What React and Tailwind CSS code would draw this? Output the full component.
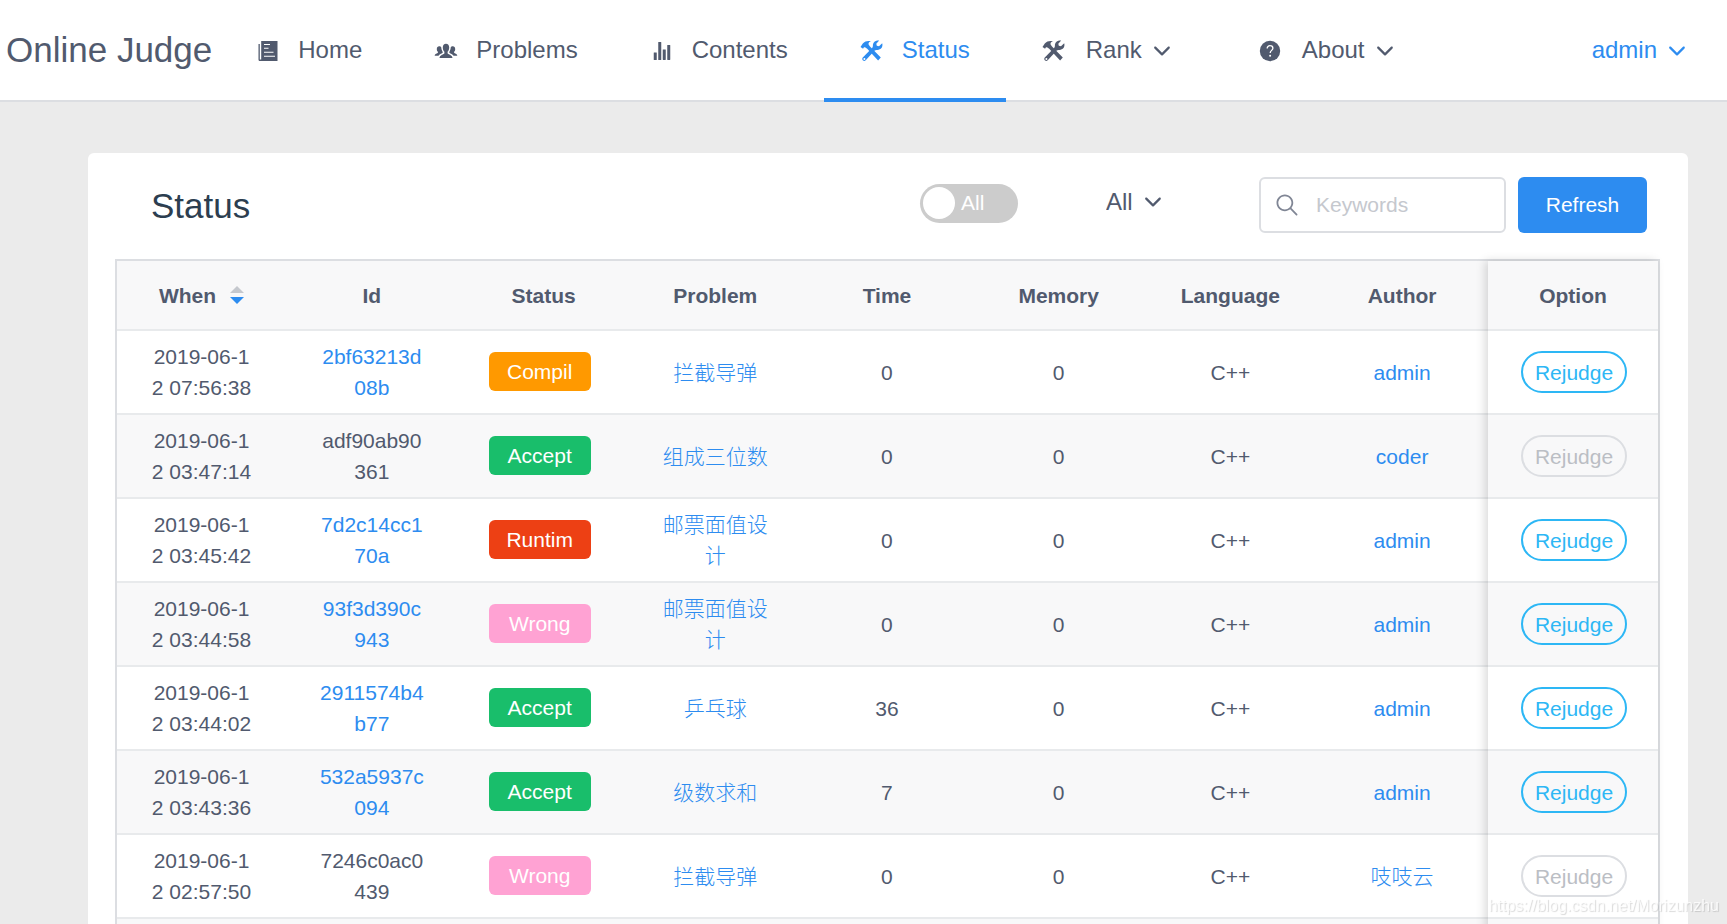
import { useState } from 'react';
import { IoIosStats, IoIosArrowDown, IoIosSearch } from 'react-icons/io';

function PaperIcon({ className }) {
  return (
    <svg viewBox="0 0 24 24" fill="currentColor" className={className}>
      <path d="M2.5 5h1.3v15.4h1.4V2h16.3v20H4.2c-1 0-1.700-.7-1.700-1.600z" />
      <path d="M8 5.500h6M8 9.200h4.500M8 13.200h9.500M8 17.200h11" stroke="#fff" strokeWidth="1.100" />
    </svg>
  );
}

function PeopleIcon({ className }) {
  return (
    <svg viewBox="0 0 24 24" fill="currentColor" className={className}>
      <path d="M12 4.800c2 0 3.200 1.500 3.200 3.700 0 1.700-.6 3.300-1.600 4.200v1.500c.3 1.300 4.600 1.400 4.900 4.800h-13c.3-3.400 4.600-3.500 4.900-4.800v-1.500c-1-.9-1.600-2.500-1.600-4.200 0-2.200 1.200-3.700 3.200-3.700z" />
      <path d="M5.200 7.200c1 0 1.800.5 2.100 1.400.1 1.700.5 3 1.400 4.300v.9c-1.400 1-3.300 1.300-4.200 3H.7c.2-2.200 2.700-2.100 3.200-3v-1c-.8-.6-1.100-1.700-1.100-2.900 0-1.700 1-2.700 2.400-2.700z" />
      <path d="M18.800 7.200c-1 0-1.800.5-2.100 1.400-.1 1.700-.5 3-1.400 4.300v.9c1.400 1 3.300 1.300 4.200 3h3.800c-.2-2.200-2.700-2.100-3.200-3v-1c.8-.6 1.100-1.700 1.100-2.900 0-1.700-1-2.700-2.400-2.700z" />
    </svg>
  );
}

function ConstructIcon({ className }) {
  return (
    <svg viewBox="0 0 24 24" fill="currentColor" className={className}>
      <path d="M.5 8l2.300-3.500C4.800 2.200 8 1.500 11 2.300 9 3 8.200 4 8.600 5.500L10 7.400l10.800 11.200-2.700 2.800L7.200 9.800 5.400 8.500c-1-.5-1.600-.2-2.300 1.200z" />
      <path
        fillRule="evenodd"
        d="M22.200 4.300L19 7.300l-2.200-.5-.5-2.100 2.900-3.100c-3.600-.6-6.500 1.800-6.300 5.200 0 .9-.2 1.500-.8 2.100l-9.300 9.600c-1.600 1.900.9 4.600 2.900 2.800l9-9.700c.6-.6 1.300-.8 2.300-.7 3.600.3 6.300-2.800 5.200-6.600zM4.400 19a1 1 0 1 1 0 2 1 1 0 0 1 0-2z"
      />
    </svg>
  );
}

function HelpIcon({ className }) {
  return (
    <svg viewBox="0 0 24 24" className={className}>
      <circle cx="12" cy="12" r="10.200" fill="currentColor" />
      <path d="M9.200 9.400c0-1.600 1.100-2.700 2.800-2.700s2.900 1 2.900 2.500c0 2.100-2.700 2.300-2.700 4.800" fill="none" stroke="#fff" strokeWidth="1.300" />
      <circle cx="12.100" cy="16.700" r="1" fill="#fff" />
    </svg>
  );
}

const NAV = [
  { label: 'Home', icon: PaperIcon },
  { label: 'Problems', icon: PeopleIcon },
  { label: 'Contents', icon: IoIosStats },
  { label: 'Status', icon: ConstructIcon, active: true },
  { label: 'Rank', icon: ConstructIcon, menu: true },
  { label: 'About', icon: HelpIcon, menu: true },
];

const COLUMNS = ['When', 'Id', 'Status', 'Problem', 'Time', 'Memory', 'Language', 'Author', 'Option'];

const STATUS_COLORS = {
  Compil: 'bg-[#ff9900]',
  Accept: 'bg-[#19be6b]',
  Runtim: 'bg-[#ed4014]',
  Wrong: 'bg-[#ffa2d3]',
};

const ROWS = [
  { when: '2019-06-12 07:56:38', id: '2bf63213d08b', status: 'Compil', problem: '拦截导弹', time: 0, author: 'admin', own: true, rejudge: true },
  { when: '2019-06-12 03:47:14', id: 'adf90ab90361', status: 'Accept', problem: '组成三位数', time: 0, author: 'coder', own: false, rejudge: false },
  { when: '2019-06-12 03:45:42', id: '7d2c14cc170a', status: 'Runtim', problem: '邮票面值设计', time: 0, author: 'admin', own: true, rejudge: true },
  { when: '2019-06-12 03:44:58', id: '93f3d390c943', status: 'Wrong', problem: '邮票面值设计', time: 0, author: 'admin', own: true, rejudge: true },
  { when: '2019-06-12 03:44:02', id: '2911574b4b77', status: 'Accept', problem: '乒乓球', time: 36, author: 'admin', own: true, rejudge: true },
  { when: '2019-06-12 03:43:36', id: '532a5937c094', status: 'Accept', problem: '级数求和', time: 7, author: 'admin', own: true, rejudge: true },
  { when: '2019-06-12 02:57:50', id: '7246c0ac0439', status: 'Wrong', problem: '拦截导弹', time: 0, author: '吱吱云', own: false, rejudge: false },
];

function NavItem({ label, icon: Icon, active, menu }) {
  const Tag = menu ? 'button' : 'a';
  const state = active ? 'border-[#2d8cf0] text-[#2d8cf0]' : 'border-transparent text-[#515a6e]';

  return (
    <Tag
      {...(menu ? { type: 'button' } : { href: '#' })}
      className={`-mb-0.5 flex h-[102px] items-center border-b-4 px-9 pt-0.5 ${menu ? 'gap-5' : 'gap-[18px]'} ${state}`}
    >
      <Icon className="mt-0.5 size-6" />
      <span className="flex items-center gap-2">
        {label}
        {menu && <IoIosArrowDown className="mt-0.5 mr-3 size-6" />}
      </span>
    </Tag>
  );
}

function Header() {
  return (
    <header className="flex h-[102px] items-start border-b-2 border-[#dcdee2] bg-white text-2xl text-[#515a6e]">
      <a href="#" className="flex h-[98px] items-center pt-0.5 pl-1.5 text-[35px]">Online Judge</a>
      <nav className="ml-2 flex">
        {NAV.map((item) => <NavItem key={item.label} {...item} />)}
      </nav>
      <button type="button" className="mr-[38px] ml-auto flex h-[98px] items-center gap-2 pt-0.5 text-[#2d8cf0]">
        admin
        <IoIosArrowDown className="mt-0.5 size-6" />
      </button>
    </header>
  );
}

function Toolbar() {
  const [mine, setMine] = useState(false);

  return (
    <div className="flex h-14 items-center pr-[13px] pl-9">
      <h1 className="pt-0.5 text-[35px] text-[#2c3e50]">Status</h1>
      <label className="mr-[88px] mb-1 ml-auto flex h-[39px] w-[98px] cursor-pointer items-center gap-1.5 rounded-full bg-[#cccccc] pl-[3px] text-white">
        <input
          type="checkbox"
          role="switch"
          className="size-8 appearance-none rounded-full bg-white"
          checked={mine}
          onChange={(e) => setMine(e.target.checked)}
        />
        All
      </label>
      <div className="relative mr-[94px] h-[50px] w-[59px] self-start text-2xl text-[#515a6e]">
        <select aria-label="Filter by result" className="h-full w-full appearance-none bg-transparent outline-none">
          <option>All</option>
        </select>
        <IoIosArrowDown className="pointer-events-none absolute inset-y-0 right-0 my-auto size-6" />
      </div>
      <div className="relative mr-3">
        <IoIosSearch className="absolute top-3.5 left-3.5 size-7 text-[#808695]" />
        <input
          type="text"
          aria-label="Keywords"
          placeholder="Keywords"
          className="h-14 w-[247px] rounded-md border-2 border-[#dcdee2] bg-white pr-3 pl-[55px] placeholder:text-[#c5c8ce]"
        />
      </div>
      <button type="button" className="h-14 w-[129px] rounded-md bg-[#2d8cf0] text-white">Refresh</button>
    </div>
  );
}

function SortArrows() {
  return (
    <svg viewBox="0 0 14 18" className="h-[18px] w-3.5">
      <path d="M0 7L7 0l7 7z" fill="#c5c8ce" />
      <path d="M0 11h14l-7 7z" fill="#2d8cf0" />
    </svg>
  );
}

function StatusTable() {
  return (
    <div className="relative mt-[26px] border-2 border-[#dcdee2]">
      <table className="w-full table-fixed border-separate border-spacing-0 text-center leading-[31px] text-[#515a6e]">
        <thead className="bg-[#f8f8f9]">
          <tr>
            {COLUMNS.map((name) => (
              <th
                key={name}
                className="h-[70px] border-b-2 border-[#e8eaec] font-bold first:w-[169px] last:w-[170px]"
              >
                {name === 'When' ? (
                  <span className="flex items-center justify-center gap-3.5">
                    When
                    <SortArrows />
                  </span>
                ) : name}
              </th>
            ))}
          </tr>
        </thead>
        <tbody className="[&_td]:h-[84px] [&_td]:border-b-2 [&_td]:border-[#e8eaec] [&_td]:px-[33px] [&_td]:break-all">
          {ROWS.map((row) => (
            <tr key={row.id} className="even:bg-[#f8f8f9]">
              <td>{row.when}</td>
              <td>{row.own ? <a href="#" className="text-[#2d8cf0]">{row.id}</a> : row.id}</td>
              <td>
                <span className={`mb-0.5 -ml-0.5 flex h-[39px] w-[102px] items-center justify-center rounded-md text-white ${STATUS_COLORS[row.status]}`}>
                  {row.status}
                </span>
              </td>
              <td><a href="#" className="font-light text-[#2d8cf0]">{row.problem}</a></td>
              <td>{row.time}</td>
              <td>0</td>
              <td>C++</td>
              <td><a href="#" className="font-light text-[#2d8cf0]">{row.author}</a></td>
              <td>
                <button
                  type="button"
                  disabled={!row.rejudge}
                  className="block h-[42px] w-[106px] rounded-full border-2 border-[#2db7f5] text-[#2db7f5] disabled:border-[#dcdee2] disabled:text-[#bbbec4]"
                >
                  Rejudge
                </button>
              </td>
            </tr>
          ))}
          {/* spacer row under the last submission */}
          <tr className="even:bg-[#f8f8f9]">
            <td colSpan={COLUMNS.length} />
          </tr>
        </tbody>
      </table>
      {/* edge shadow of the pinned column */}
      <div className="pointer-events-none absolute inset-y-0 right-0 w-[170px] shadow-[-3px_0_9px_rgba(0,0,0,0.15)]" />
    </div>
  );
}

export default function App() {
  return (
    <div className="h-screen overflow-hidden bg-[#ebebeb] font-['Liberation_Sans','Noto_Sans_CJK_SC',sans-serif] text-[21px]">
      <Header />
      <main className="pt-[51px] pr-[39px] pl-[88px]">
        <section className="rounded-md bg-white pt-6 pr-7 pb-7 pl-[27px]">
          <Toolbar />
          <StatusTable />
        </section>
      </main>
      <p className="pointer-events-none fixed right-2 bottom-1.5 text-base text-white/80 [text-shadow:1px_1px_1px_rgba(0,0,0,0.15)]">
        https://blog.csdn.net/Morizunzhu
      </p>
    </div>
  );
}
